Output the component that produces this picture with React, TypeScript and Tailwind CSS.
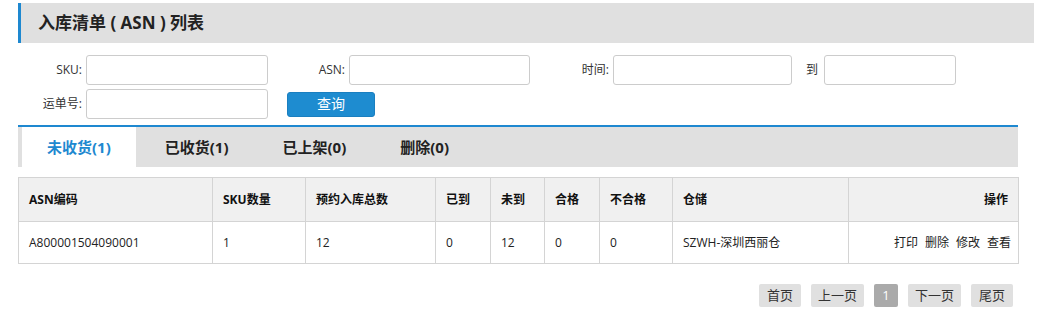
const cols = [194, 93, 130, 55, 54, 55, 73, 176, 170];

const headers = ["ASN编码", "SKU数量", "预约入库总数", "已到", "未到", "合格", "不合格", "仓储"];
const row = ["A800001504090001", "1", "12", "0", "12", "0", "0", "SZWH-深圳西丽仓"];

const tabs = [
  { label: "未收货(1)", active: true },
  { label: "已收货(1)", active: false },
  { label: "已上架(0)", active: false },
  { label: "删除(0)", active: false },
];

function Field({ label, labelW, inputW }: { label: string; labelW: string; inputW: string }) {
  return (
    <div className="flex items-center">
      <label className={`${labelW} text-right pr-1 text-[12px] text-[#333]`}>{label}</label>
      <input className={`${inputW} h-[30px] border border-[#ccc] rounded-[3px] bg-white outline-none`} />
    </div>
  );
}

export default function App() {
  return (
    <div className="w-[1060px] h-[330px] bg-white pt-[3px] pl-[18px] text-[#333] font-['Open_Sans','Noto_Sans_CJK_SC',sans-serif]">
      {/* title bar */}
      <div className="w-[1016px] h-10 bg-[#e0e0e0] border-l-[3px] border-[#1e88d0] flex items-center pl-[17px]">
        <h1 className="text-[17px] font-bold text-[#222]">入库清单 ( ASN ) 列表</h1>
      </div>

      {/* search form */}
      <div className="mt-3 flex flex-col gap-1">
        <div className="flex items-center">
          <Field label="SKU:" labelW="w-[68px]" inputW="w-[182px]" />
          <Field label="ASN:" labelW="w-[81px]" inputW="w-[181px]" />
          <Field label="时间:" labelW="w-[83px]" inputW="w-[179px]" />
          <Field label="到" labelW="w-[32px] pr-[6px]" inputW="w-[132px]" />
        </div>
        <div className="flex items-center">
          <Field label="运单号:" labelW="w-[68px]" inputW="w-[182px]" />
          <button className="ml-[19px] w-[88px] h-[25px] bg-[#1e8cd0] border border-[#1a7fc0] rounded-[3px] text-white text-[14px] leading-none">
            查询
          </button>
        </div>
      </div>

      {/* tabs */}
      <div className="mt-[6px] w-[1000px] h-[42px] border-t-2 border-[#1e88d0] bg-[#e0e0e0] flex">
        {tabs.map((t) => (
          <div
            key={t.label}
            className={
              t.active
                ? "ml-1 px-[25px] bg-white flex items-center text-[15px] font-bold text-[#1e88d0]"
                : "ml-1 px-[25px] flex items-center text-[15px] font-bold text-[#222]"
            }
          >
            {t.label}
          </div>
        ))}
      </div>

      {/* table */}
      <table className="mt-[10px] w-[1000px] table-fixed border-collapse text-[12px]">
        <colgroup>
          {cols.map((w, i) => (
            <col key={i} style={{ width: w }} />
          ))}
        </colgroup>
        <thead>
          <tr className="h-[44px] bg-[#f0f0f0]">
            {headers.map((h) => (
              <th key={h} className="border border-[#d4d4d4] text-left font-bold pl-[10px] text-[#111]">
                {h}
              </th>
            ))}
            <th className="border border-[#d4d4d4] text-right font-bold pr-[10px] text-[#111]">操作</th>
          </tr>
        </thead>
        <tbody>
          <tr className="h-[42px]">
            {row.map((c, i) => (
              <td key={i} className="border border-[#d4d4d4] pl-[10px] text-[#222]">
                {c}
              </td>
            ))}
            <td className="border border-[#d4d4d4] pr-[7px]">
              <div className="flex justify-end gap-[7px] text-[#222]">
                <span>打印</span>
                <span>删除</span>
                <span>修改</span>
                <span>查看</span>
              </div>
            </td>
          </tr>
        </tbody>
      </table>

      {/* pagination */}
      <div className="mt-5 w-[1000px] pr-[5px] flex justify-end gap-[10px] text-[13px]">
        <span className="h-[23px] px-2 bg-[#e0e0e0] rounded-[2px] flex items-center text-[#333]">首页</span>
        <span className="h-[23px] px-[7px] bg-[#e0e0e0] rounded-[2px] flex items-center text-[#333]">上一页</span>
        <span className="h-[23px] w-6 bg-[#aaa] rounded-[2px] flex items-center justify-center text-white">1</span>
        <span className="h-[23px] px-[7px] bg-[#e0e0e0] rounded-[2px] flex items-center text-[#333]">下一页</span>
        <span className="h-[23px] px-2 bg-[#e0e0e0] rounded-[2px] flex items-center text-[#333]">尾页</span>
      </div>
    </div>
  );
}
